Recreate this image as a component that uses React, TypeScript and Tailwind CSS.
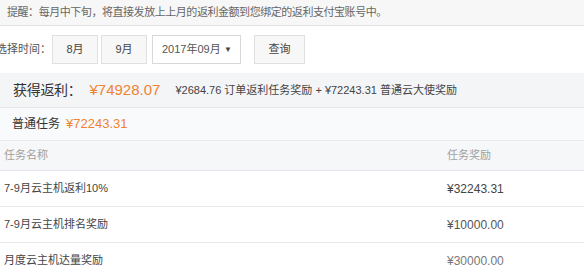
import React from 'react';

const font = { fontFamily: '"Liberation Sans", "Noto Sans CJK SC", sans-serif' };

const rows = [
  { name: '7-9月云主机返利10%', amount: '32243.31', tone: 'text-[#444]' },
  { name: '7-9月云主机排名奖励', amount: '10000.00', tone: 'text-[#555]' },
  { name: '月度云主机达量奖励', amount: '30000.00', tone: 'text-[#777]' },
];

export default function App() {
  return (
    <div className="w-[584px] h-[278px] overflow-hidden bg-white text-[#333]" style={font}>
      {/* Notice */}
      <div className="h-[26px] flex items-center pl-[7px] bg-[#f7f7f7] border-b border-[#e2e2e2] text-[11px] tracking-[-0.45px] text-[#666]">
        提醒：每月中下旬，将直接发放上上月的返利金额到您绑定的返利支付宝账号中。
      </div>

      {/* Filter */}
      <div className="flex items-center h-[29px] mt-[9px] -ml-[4px] text-[11px]">
        <span className="w-[56px] text-[#555]">选择时间：</span>
        <button className="w-[46px] h-[29px] bg-[#f7f7f7] border border-[#e0e0e0] text-[#444]">8月</button>
        <button className="w-[46px] h-[29px] ml-[3px] bg-[#f7f7f7] border border-[#e0e0e0] text-[#444]">9月</button>
        <div className="w-[89px] h-[29px] ml-[5px] flex items-center justify-between pl-[9px] pr-[8px] bg-white border border-[#d8d8d8] text-[#555]">
          <span>2017年09月</span>
          <span className="text-[8px] text-[#444]">▼</span>
        </div>
        <button className="w-[51px] h-[29px] ml-[13px] bg-[#f7f7f7] border border-[#e0e0e0] text-[#444]">查询</button>
      </div>

      {/* Summary */}
      <div className="mt-[9px] h-[35px] flex items-center pl-[13px] bg-[#f4f5f7] border-b border-[#e3e5e8]">
        <span className="text-[14px] tracking-[-0.3px] text-[#333]">获得返利：</span>
        <span className="ml-[8px] text-[15px] text-[#f08232]">¥74928.07</span>
        <span className="ml-[15px] text-[11px] text-[#444]">
          ¥2684.76 订单返利任务奖励 + ¥72243.31 普通云大使奖励
        </span>
      </div>

      {/* Group */}
      <div className="h-[33px] flex items-center pl-[12px] bg-[#f9fafb] border-b border-[#e8eaed]">
        <span className="text-[12px] text-[#333]">普通任务</span>
        <span className="ml-[6px] text-[13px] text-[#f08232]">¥72243.31</span>
      </div>

      {/* Table */}
      <div className="grid grid-cols-[447px_1fr] h-[30px] items-center bg-[#f6f7f9] border-b border-[#e3e5e8] text-[11px] text-[#a0a0a0]">
        <span className="pl-[4px]">任务名称</span>
        <span>任务奖励</span>
      </div>
      {rows.map((r) => (
        <div key={r.name} className="grid grid-cols-[447px_1fr] h-[36px] items-center border-b border-[#e8eaed]">
          <span className="pl-[4px] text-[11px] text-[#444]">{r.name}</span>
          <span className={`text-[12px] ${r.tone}`}>¥{r.amount}</span>
        </div>
      ))}
    </div>
  );
}
